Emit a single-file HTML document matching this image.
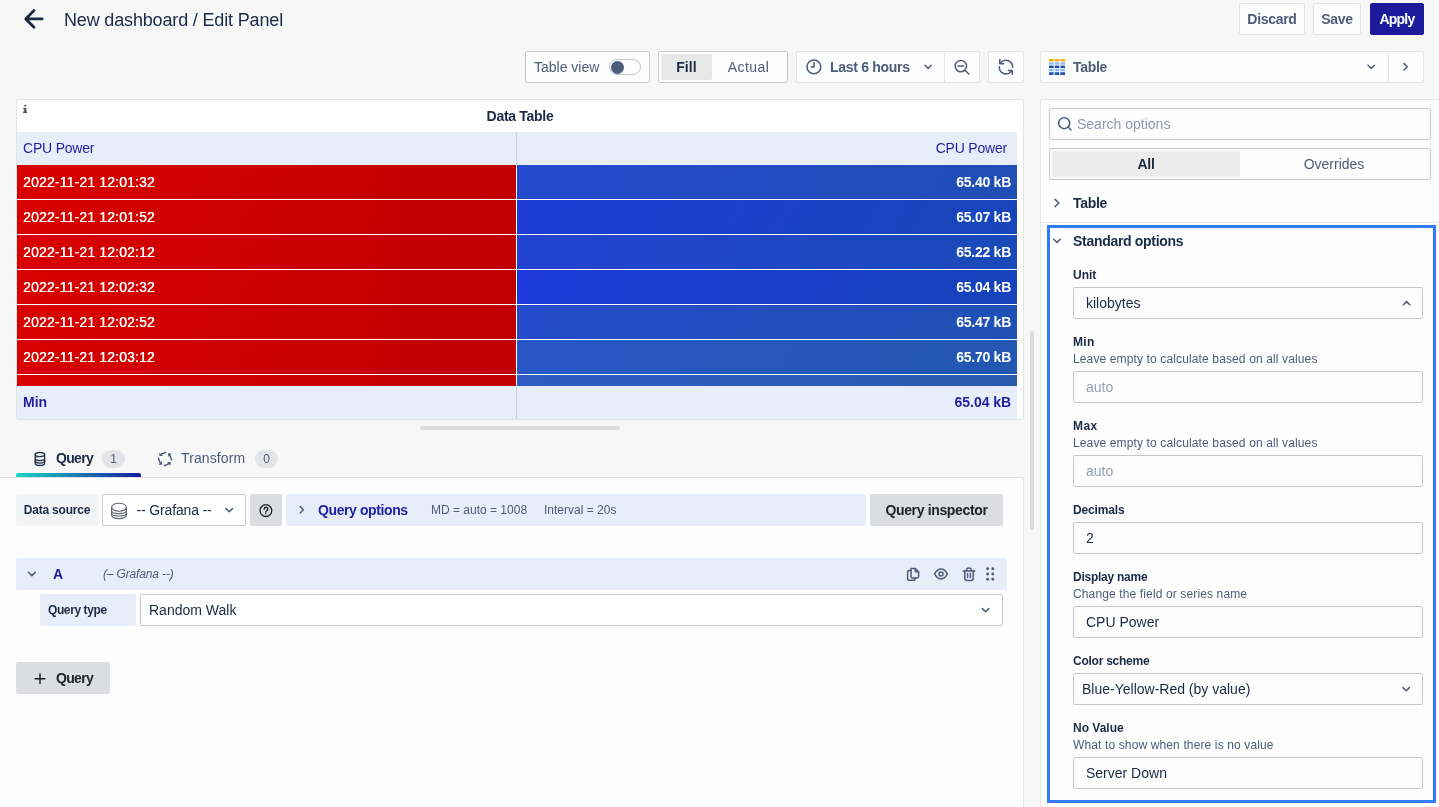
<!DOCTYPE html>
<html><head><meta charset="utf-8">
<style>
*{box-sizing:border-box;margin:0;padding:0}
html,body{width:1439px;height:807px;overflow:hidden}
body{position:relative;background:#f7f7f7;font-family:"Liberation Sans",sans-serif;color:#1b2a45;font-size:14px}
#root{position:absolute;left:0;top:0;width:1439px;height:807px;will-change:transform}
.a{position:absolute;white-space:nowrap}
.m{font-weight:bold;letter-spacing:-0.3px}
.box{position:absolute;border:1px solid #e3e4e6;background:#fdfdfd;border-radius:2px}
.t2{color:#4d5c78}
.ic{stroke:#4d5c78;fill:none;stroke-width:1.5;stroke-linecap:round;stroke-linejoin:round}
.nv{stroke:#1b2a45}
.tbl-row{position:absolute;left:17px;width:1000px;height:34px}
.c1{position:absolute;left:0;top:0;width:499px;height:34px;color:#fff;padding-left:6px;line-height:34px;letter-spacing:0.15px;text-shadow:0.35px 0 0 #fff}
.c2{position:absolute;left:500px;top:0;width:500px;height:34px;color:#fff;text-align:right;padding-right:6px;line-height:34px;font-weight:bold;letter-spacing:-0.25px}
.red{background:linear-gradient(120deg,#d90000,#bf0000)}
.lbl{position:absolute;left:1073px;font-size:12px;line-height:15px;color:#1b2a45;font-weight:bold;letter-spacing:-0.25px}
.desc{position:absolute;left:1073px;font-size:12px;line-height:15px;color:#4d5c78;letter-spacing:0.13px}
.inp{position:absolute;left:1073px;width:350px;height:32px;border:1px solid #c8c9cc;border-radius:2px;background:#fdfdfd;font-size:14px;color:#1b2a45;padding-left:12px;line-height:30px}
</style></head><body><div id="root">

<!-- ===== header ===== -->
<div class="a" style="left:64px;top:9px;font-size:18px;line-height:22px;letter-spacing:-0.16px">New dashboard / Edit Panel</div>
<div class="box m t2" style="left:1239px;top:3px;width:66px;height:32px;line-height:30px;text-align:center">Discard</div>
<div class="box m t2" style="left:1313px;top:3px;width:48px;height:32px;line-height:30px;text-align:center">Save</div>
<div class="box m" style="left:1370px;top:3px;width:54px;height:32px;line-height:30px;text-align:center;background:#1b1b9c;border-color:#1b1b9c;color:#fff;letter-spacing:-0.8px">Apply</div>

<!-- ===== toolbar ===== -->
<div class="box" style="left:525px;top:51px;width:125px;height:32px;border-color:#c8c9cc"></div>
<div class="a t2" style="left:534px;top:59px;line-height:16px">Table view</div>
<div class="a" style="left:609px;top:59px;width:32px;height:16px;border:1px solid #c2c4c8;border-radius:8px;background:#fdfdfd"></div>
<div class="a" style="left:611.4px;top:60.5px;width:13px;height:13px;border-radius:50%;background:#4d5c78"></div>

<div class="box" style="left:658px;top:51px;width:130px;height:32px;border-color:#c8c9cc"></div>
<div class="a m" style="left:661px;top:54px;width:51px;height:26px;background:#e8e8e8;border-radius:2px;line-height:26px;text-align:center;color:#1b2a45;letter-spacing:0.1px">Fill</div>
<div class="a t2" style="left:712px;top:54px;width:73px;height:26px;line-height:26px;text-align:center;letter-spacing:0.4px">Actual</div>

<div class="box" style="left:796px;top:51px;width:184px;height:32px"></div>
<div class="a" style="left:944px;top:52px;width:1px;height:30px;background:#e3e4e6"></div>
<div class="a m t2" style="left:830px;top:59px;line-height:16px">Last 6 hours</div>
<div class="box" style="left:988px;top:51px;width:36px;height:32px"></div>

<div class="box" style="left:1040px;top:51px;width:384px;height:32px"></div>
<div class="a" style="left:1388px;top:52px;width:1px;height:30px;background:#e3e4e6"></div>
<div class="a m t2" style="left:1073px;top:59px;line-height:16px">Table</div>

<!-- ===== panel ===== -->
<div class="a" style="left:16px;top:99px;width:1008px;height:321px;background:#fff;border:1px solid #e3e4e6;border-radius:2px"></div>
<div class="a m" style="left:16px;top:108px;width:1008px;text-align:center;line-height:16px">Data Table</div>
<div class="a" style="left:17px;top:132px;width:1000px;height:33px;background:#e8eef9"></div>
<div class="a" style="left:516px;top:132px;width:1px;height:33px;background:#c9ccd3"></div>
<div class="a" style="left:23px;top:140px;color:#1f1fa1;line-height:16px;letter-spacing:-0.2px">CPU Power</div>
<div class="a" style="left:517px;top:140px;width:490px;text-align:right;color:#1f1fa1;line-height:16px;letter-spacing:-0.2px">CPU Power</div>
<div class="a" style="left:17px;top:165px;width:1000px;height:221px;background:#fff"></div>
<div class="tbl-row" style="top:165px"><div class="c1 red">2022-11-21 12:01:32</div><div class="c2" style="background:linear-gradient(120deg,#2549cd,#1f4fb5)">65.40 kB</div></div>
<div class="tbl-row" style="top:200px"><div class="c1 red">2022-11-21 12:01:52</div><div class="c2" style="background:linear-gradient(120deg,#1e3bd6,#1746b8)">65.07 kB</div></div>
<div class="tbl-row" style="top:235px"><div class="c1 red">2022-11-21 12:02:12</div><div class="c2" style="background:linear-gradient(120deg,#2244d1,#1a4ab9)">65.22 kB</div></div>
<div class="tbl-row" style="top:270px"><div class="c1 red">2022-11-21 12:02:32</div><div class="c2" style="background:linear-gradient(120deg,#1d38d8,#1643ba)">65.04 kB</div></div>
<div class="tbl-row" style="top:305px"><div class="c1 red">2022-11-21 12:02:52</div><div class="c2" style="background:linear-gradient(120deg,#254ccb,#1f51b4)">65.47 kB</div></div>
<div class="tbl-row" style="top:340px"><div class="c1 red">2022-11-21 12:03:12</div><div class="c2" style="background:linear-gradient(120deg,#2a57c6,#2257b0)">65.70 kB</div></div>
<div class="tbl-row" style="top:375px;height:11px;overflow:hidden"><div class="c1 red"></div><div class="c2" style="background:linear-gradient(120deg,#2f5bc4,#2a5aab)"></div></div>
<div class="a" style="left:17px;top:386px;width:1000px;height:33px;background:#e8eef9"></div>
<div class="a" style="left:516px;top:386px;width:1px;height:33px;background:#c9ccd3"></div>
<div class="a m" style="left:23px;top:394px;color:#1f1fa1;line-height:16px;letter-spacing:0px">Min</div>
<div class="a m" style="left:517px;top:394px;width:494px;text-align:right;color:#1f1fa1;line-height:16px;letter-spacing:-0.05px">65.04 kB</div>
<div class="a" style="left:420px;top:426px;width:200px;height:4px;background:#dcdcde;border-radius:2px"></div>
<div class="a" style="left:1030px;top:331px;width:4px;height:199px;background:#dcdcde;border-radius:2px"></div>

<!-- ===== tabs ===== -->
<div class="a m" style="left:56px;top:450px;line-height:16px;letter-spacing:-0.7px">Query</div>
<div class="a t2" style="left:102px;top:450px;width:23px;height:18px;border-radius:9px;background:#e3e4e8;font-size:12px;line-height:18px;text-align:center">1</div>
<div class="a" style="left:16px;top:473px;width:125px;height:4px;border-radius:2px 2px 0 0;background:linear-gradient(90deg,#1ad6c4,#1a1aa0)"></div>
<div class="a t2" style="left:181px;top:450px;line-height:16px;letter-spacing:0.1px">Transform</div>
<div class="a t2" style="left:255px;top:450px;width:23px;height:18px;border-radius:9px;background:#e3e4e8;font-size:12px;line-height:18px;text-align:center">0</div>

<!-- ===== query section ===== -->
<div class="a" style="left:0;top:477px;width:1024px;height:340px;background:#fdfdfd;border-top:1px solid #e0e1e3;border-right:1px solid #e3e4e6;border-radius:0 2px 0 0"></div>
<div class="a m" style="left:16px;top:494px;width:82px;height:32px;background:#f3f4f5;border-radius:2px;font-size:12px;line-height:32px;text-align:center;letter-spacing:-0.2px">Data source</div>
<div class="a" style="left:102px;top:494px;width:144px;height:32px;border:1px solid #c8c9cc;border-radius:2px;background:#fff"></div>
<div class="a" style="left:136.5px;top:502px;line-height:16px;letter-spacing:-0.15px">-- Grafana --</div>
<div class="a" style="left:250px;top:494px;width:32px;height:32px;background:#dcdde0;border-radius:2px"></div>
<div class="a" style="left:286px;top:494px;width:580px;height:32px;background:#e8eef9;border-radius:2px"></div>
<div class="a m" style="left:318px;top:502px;color:#1f1fa1;line-height:16px;letter-spacing:-0.4px">Query options</div>
<div class="a t2" style="left:431px;top:503px;font-size:12px;line-height:14px">MD = auto = 1008</div>
<div class="a t2" style="left:544px;top:503px;font-size:12px;line-height:14px">Interval = 20s</div>
<div class="a m" style="left:870px;top:494px;width:133px;height:32px;background:#dcdde0;border-radius:2px;line-height:32px;text-align:center;color:#202328;letter-spacing:-0.35px">Query inspector</div>

<div class="a" style="left:16px;top:558px;width:991px;height:32px;background:#e8eef9;border-radius:2px"></div>
<div class="a m" style="left:53px;top:566px;color:#1a1a9c;line-height:16px">A</div>
<div class="a t2" style="left:103px;top:567px;font-style:italic;font-size:12px;line-height:14px;letter-spacing:-0.15px">(– Grafana --)</div>

<div class="a m" style="left:40px;top:594px;width:96px;height:32px;background:#e8eef9;border-radius:2px;font-size:12px;line-height:32px;padding-left:8px;letter-spacing:-0.4px">Query type</div>
<div class="a" style="left:140px;top:594px;width:863px;height:32px;border:1px solid #c8c9cc;border-radius:2px;background:#fff;padding-left:8px;line-height:30px">Random Walk</div>

<div class="a m" style="left:16px;top:662px;width:94px;height:32px;background:#dcdde0;border-radius:2px;line-height:32px;padding-left:40px;color:#202328;letter-spacing:-0.7px">Query</div>

<!-- ===== options pane ===== -->
<div class="a" style="left:1040px;top:99px;width:399px;height:708px;background:#fdfdfd;border-left:1px solid #e3e4e6;border-top:1px solid #e3e4e6;border-radius:2px 0 0 0"></div>
<div class="a" style="left:1049px;top:108px;width:382px;height:32px;border:1px solid #c8c9cc;border-radius:2px;background:#fdfdfd"></div>
<div class="a" style="left:1077px;top:116px;color:#8e9ab0;line-height:16px">Search options</div>
<div class="a" style="left:1049px;top:148px;width:382px;height:32px;border:1px solid #c8c9cc;border-radius:2px;background:#fdfdfd"></div>
<div class="a m" style="left:1052px;top:151px;width:188px;height:26px;background:#ececec;border-radius:2px;line-height:26px;text-align:center">All</div>
<div class="a t2" style="left:1240px;top:151px;width:188px;height:26px;line-height:26px;text-align:center">Overrides</div>
<div class="a m" style="left:1073px;top:195px;line-height:16px">Table</div>
<div class="a" style="left:1041px;top:222px;width:398px;height:1px;background:#e6e7e9"></div>

<div class="a" style="left:1047px;top:225px;width:389px;height:578px;border:3px solid #2f7cf6"></div>
<div class="a m" style="left:1073px;top:233px;line-height:16px">Standard options</div>

<div class="lbl" style="top:268px;letter-spacing:0">Unit</div>
<div class="inp" style="top:287px">kilobytes</div>

<div class="lbl" style="top:335px;letter-spacing:0.35px">Min</div>
<div class="desc" style="top:352px">Leave empty to calculate based on all values</div>
<div class="inp" style="top:371px;color:#97a1b4">auto</div>

<div class="lbl" style="top:419px;letter-spacing:0.4px">Max</div>
<div class="desc" style="top:436px">Leave empty to calculate based on all values</div>
<div class="inp" style="top:455px;color:#97a1b4">auto</div>

<div class="lbl" style="top:503px;letter-spacing:-0.15px">Decimals</div>
<div class="inp" style="top:522px">2</div>

<div class="lbl" style="top:570px">Display name</div>
<div class="desc" style="top:587px">Change the field or series name</div>
<div class="inp" style="top:606px">CPU Power</div>

<div class="lbl" style="top:654px">Color scheme</div>
<div class="inp" style="top:673px;padding-left:8px">Blue-Yellow-Red (by value)</div>

<div class="lbl" style="top:721px;letter-spacing:0">No Value</div>
<div class="desc" style="top:738px">What to show when there is no value</div>
<div class="inp" style="top:757px">Server Down</div>

<!-- ===== icon overlay (page coordinates) ===== -->
<svg class="a" style="left:0;top:0" width="1439" height="807" viewBox="0 0 1439 807">
 <!-- back arrow -->
 <path d="M42.2 18.9H26M34 10.6L25.7 18.9L34 27.2" fill="none" stroke="#1b2a45" stroke-width="2.8" stroke-linecap="round" stroke-linejoin="round"/>
 <!-- clock -->
 <circle cx="813.9" cy="66.9" r="6.9" class="ic" stroke-width="1.4"/>
 <path d="M814 62.6V67.1H811.2" class="ic" stroke-width="1.4"/>
 <!-- chevron time -->
 <path d="M925 65.2L928.1 68.4L931.2 65.2" class="ic" stroke-width="1.4"/>
 <!-- zoom out -->
 <circle cx="960.8" cy="66.1" r="5.7" class="ic" stroke-width="1.5"/>
 <path d="M958 66.1H963.6M965 70.3L968.8 74" class="ic" stroke-width="1.5"/>
 <!-- refresh -->
 <path d="M1000.8 62.6A6.7 6.7 0 0 1 1012.6 67.2M1011.2 71.4A6.7 6.7 0 0 1 999.3 66.8" class="ic" stroke-width="1.5"/>
 <path d="M999.8 59.6V63.8H1003.6M1008.4 70.4H1012.2V74.2" class="ic" stroke-width="1.5"/>
 <!-- viz picker table icon -->
 <g>
  <rect x="1049" y="59" width="4.6" height="2.4" fill="#ffa90a"/><rect x="1054.7" y="59" width="4.6" height="2.4" fill="#ffa90a"/><rect x="1060.4" y="59" width="4.6" height="2.4" fill="#ffa90a"/>
  <rect x="1049" y="62.3" width="4.6" height="2.4" fill="#8db9f5"/><rect x="1054.7" y="62.3" width="4.6" height="2.4" fill="#8db9f5"/><rect x="1060.4" y="62.3" width="4.6" height="2.4" fill="#8db9f5"/>
  <rect x="1049" y="65.6" width="4.6" height="2.4" fill="#1f4fb0"/><rect x="1054.7" y="65.6" width="4.6" height="2.4" fill="#1f4fb0"/><rect x="1060.4" y="65.6" width="4.6" height="2.4" fill="#1f4fb0"/>
  <rect x="1049" y="68.9" width="4.6" height="2.4" fill="#8db9f5"/><rect x="1054.7" y="68.9" width="4.6" height="2.4" fill="#8db9f5"/><rect x="1060.4" y="68.9" width="4.6" height="2.4" fill="#8db9f5"/>
  <rect x="1049" y="72.2" width="4.6" height="2.8" fill="#2454b2"/><rect x="1054.7" y="72.2" width="4.6" height="2.8" fill="#2454b2"/><rect x="1060.4" y="72.2" width="4.6" height="2.8" fill="#2454b2"/>
 </g>
 <path d="M1368 65.2L1371.2 68.4L1374.4 65.2" class="ic" stroke-width="1.4"/>
 <path d="M1404 63.6L1407.2 66.8L1404 70" class="ic" stroke-width="1.4"/>
 <!-- info i -->
 <ellipse cx="25.3" cy="105.7" rx="1.1" ry="0.9" fill="#454b52"/>
 <path d="M23.2 107.9H26.3V111.5H27V112.9H23.1V111.5H24.3V109.3H23.2Z" fill="#454b52"/>
 <!-- tab icons -->
 <g fill="none" stroke="#1b2a45" stroke-width="1.3" stroke-linecap="round">
  <ellipse cx="39.9" cy="454.6" rx="4.7" ry="2.1"/>
  <path d="M35.2 454.6V463.2C35.2 464.4 37.3 465.4 39.9 465.4S44.6 464.4 44.6 463.2V454.6M35.2 458.5C35.2 459.7 37.3 460.6 39.9 460.6S44.6 459.7 44.6 458.5M35.2 461.2V461.2"/>
  <path d="M35.2 461C35.2 462.2 37.3 463.1 39.9 463.1S44.6 462.2 44.6 461"/>
 </g>
 <circle cx="37" cy="457.4" r="0.5" fill="#1b2a45"/><circle cx="37" cy="461.9" r="0.5" fill="#1b2a45"/>
 <g fill="#4d5c78">
  <path d="M159.3 452.6L159.3 455.9L162.9 455.9Z"/><path d="M168.1 453.3L171.4 453.3L168.1 456.9Z"/>
  <path d="M170.7 462.1L170.7 465.4L167.1 462.1Z"/><path d="M161.9 464.7L158.6 464.7L161.9 461.1Z"/>
 </g>
 <path d="M161.1 454.2L165.7 452.4M169.8 455.1L171.6 459.7M168.9 463.8L164.3 465.6M160.2 462.9L158.4 458.3" class="ic" stroke-width="1.4"/>
 <!-- datasource db icon -->
 <g fill="none" stroke="#5f6368" stroke-width="1.1">
  <ellipse cx="119" cy="507.2" rx="7.4" ry="4"/>
  <path d="M111.6 507.2V515C111.6 517.2 114.9 518.6 119 518.6S126.4 517.2 126.4 515V507.2"/>
  <path d="M111.6 510.8C111.6 512.6 114.9 513.6 119 513.6S126.4 512.6 126.4 510.8"/>
  <path d="M111.6 513.2C111.6 515 114.9 516 119 516S126.4 515 126.4 513.2"/>
 </g>
 <path d="M226 508.6L229.2 511.8L232.4 508.6" class="ic" stroke-width="1.4"/>
 <!-- help -->
 <circle cx="265.9" cy="510.6" r="5.9" fill="none" stroke="#1f2328" stroke-width="1.3"/>
 <path d="M264.2 509.1A1.8 1.8 0 1 1 266.8 510.6C266.2 510.9 265.9 511.3 265.9 512" fill="none" stroke="#1f2328" stroke-width="1.4" stroke-linecap="round"/>
 <circle cx="265.9" cy="513.6" r="0.75" fill="#1f2328"/>
 <!-- query options chevron -->
 <path d="M300.2 506.6L303.4 509.8L300.2 513" class="ic" stroke-width="1.4"/>
 <!-- row A chevron -->
 <path d="M28.3 572.2L31.9 575.6L35.4 572.2" class="ic" stroke-width="1.5"/>
 <!-- row actions -->
 <g class="ic" stroke-width="1.3">
  <path d="M911 568.6H915.3L918.6 571.8V576.6Q918.6 578 917.2 578H912.4Q911 578 911 576.6Z"/>
  <path d="M915.3 568.6V571.8H918.6"/>
  <path d="M911 570.6H908.9Q907.6 570.6 907.6 571.9V579Q907.6 580.3 908.9 580.3H913.8Q915.1 580.3 915.1 579V578"/>
 </g>
 <g class="ic" stroke-width="1.4">
  <path d="M934.6 573.9Q937.3 568.9 941 568.9T947.4 573.9Q944.7 578.9 941 578.9T934.6 573.9Z"/>
  <circle cx="941" cy="573.9" r="2"/>
 </g>
 <g class="ic" stroke-width="1.3">
  <path d="M963.2 571H974.8M966.6 571V569.8Q966.6 568 968.9 568Q971.3 568 971.3 569.8V571"/>
  <path d="M964.8 571V578.6Q964.8 580.4 966.6 580.4H971.4Q973.2 580.4 973.2 578.6V571"/>
  <path d="M967.6 573.6V577.6M970.4 573.6V577.6"/>
 </g>
 <g fill="#4d5c78">
  <circle cx="987.6" cy="568.8" r="1.45"/><circle cx="992.8" cy="568.8" r="1.45"/>
  <circle cx="987.6" cy="574" r="1.45"/><circle cx="992.8" cy="574" r="1.45"/>
  <circle cx="987.6" cy="579.2" r="1.45"/><circle cx="992.8" cy="579.2" r="1.45"/>
 </g>
 <path d="M982.4 608.6L985.6 611.8L988.8 608.6" class="ic" stroke-width="1.4"/>
 <!-- + query -->
 <path d="M40 674V683.6M35.2 678.8H44.8" stroke="#1f2328" stroke-width="1.5" stroke-linecap="round"/>
 <!-- search -->
 <circle cx="1064.2" cy="123.2" r="5.5" class="ic" stroke-width="1.3"/>
 <path d="M1068.3 127.3L1071 130" class="ic" stroke-width="1.3"/>
 <!-- section chevrons -->
 <path d="M1055 199.4L1058.8 203L1055 206.6" class="ic" stroke-width="1.4"/>
 <path d="M1053.6 239.2L1057 242.5L1060.4 239.2" class="ic" stroke-width="1.4"/>
 <!-- unit caret up -->
 <path d="M1403.4 304.8L1406.6 301.6L1409.8 304.8" class="ic" stroke-width="1.4"/>
 <!-- color scheme chevron -->
 <path d="M1403 687.6L1406.2 690.8L1409.4 687.6" class="ic" stroke-width="1.4"/>
</svg>

</div></body></html>
